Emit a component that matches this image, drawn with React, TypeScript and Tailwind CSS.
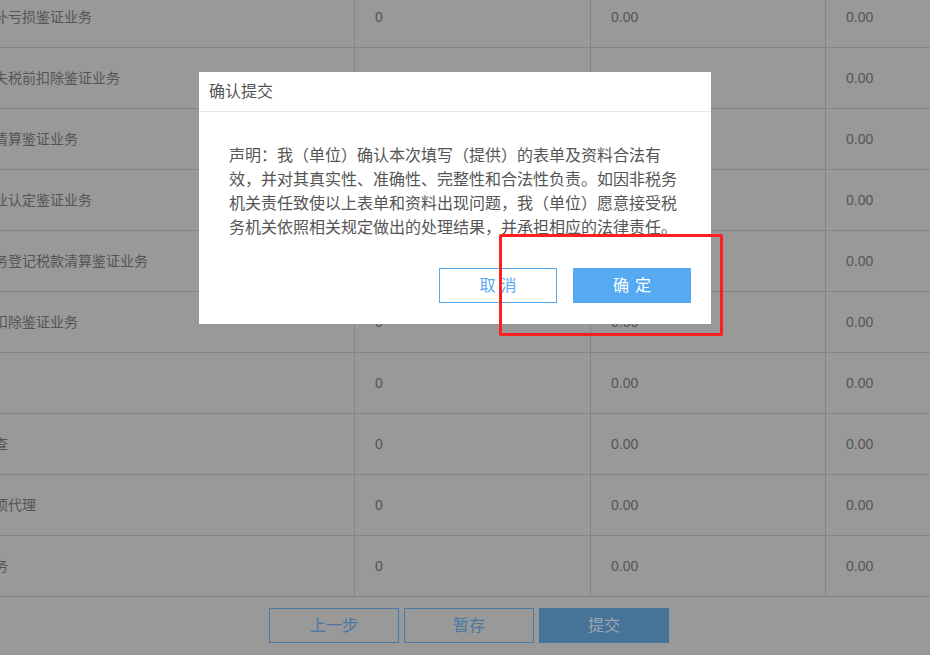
const FONT = "font-['Liberation_Sans','Noto_Sans_CJK_SC',sans-serif]"

const rows = [
  '补亏损鉴证业务',
  '失税前扣除鉴证业务',
  '清算鉴证业务',
  '业认定鉴证业务',
  '务登记税款清算鉴证业务',
  '扣除鉴证业务',
  '',
  '查',
  '项代理',
  '务',
]

function Row({ label }: { label: string }) {
  return (
    <div className="flex h-[61px] border-b border-[#858585] text-[14px] text-[#555]">
      <div className="flex w-[355px] items-center border-r border-[#858585]">
        <span className="-ml-[6px] whitespace-nowrap">{label}</span>
      </div>
      <div className="flex w-[236px] items-center border-r border-[#858585] pl-[20px]">0</div>
      <div className="flex w-[235px] items-center border-r border-[#858585] pl-[20px]">0.00</div>
      <div className="flex flex-1 items-center pl-[20px]">0.00</div>
    </div>
  )
}

export default function App() {
  return (
    <div className={`relative h-[655px] w-[930px] overflow-hidden bg-[#999] ${FONT}`}>
      {/* ── table (behind overlay) ── */}
      <div className="-mt-[13px]">
        {rows.map((r, i) => (
          <Row key={i} label={r} />
        ))}
      </div>

      {/* ── step buttons ── */}
      <div className="mt-[11px] flex justify-center gap-[5px] pl-[8px] text-[16px]">
        <button className="h-[35px] w-[130px] border border-[#4a7aa3] text-[#4a78a0]">上一步</button>
        <button className="h-[35px] w-[130px] border border-[#4a7aa3] text-[#4a78a0]">暂存</button>
        <button className="h-[35px] w-[130px] bg-[#467398] text-[#9aa6b2]">提交</button>
      </div>

      {/* ── dialog ── */}
      <div className="absolute left-[199px] top-[72px] w-[512px] bg-white">
        <div className="flex h-[40px] items-center border-b border-[#e8e8e8] pl-[10px] text-[16px] text-[#555]">
          确认提交
        </div>
        <div className="px-[30px] pb-[21px] pt-[32px]">
          <p className="text-[16px] leading-[24px] text-[#555]">
            声明：我（单位）确认本次填写（提供）的表单及资料合法有效，并对其真实性、准确性、完整性和合法性负责。如因非税务机关责任致使以上表单和资料出现问题，我（单位）愿意接受税务机关依照相关规定做出的处理结果，并承担相应的法律责任。
          </p>
          <div className="mt-[28px] flex justify-end gap-[16px] pr-[-10px]">
            <button className="h-[35px] w-[118px] border border-[#55aaf0] pl-[5px] text-[16px] tracking-[5px] text-[#55aaf0]">
              取消
            </button>
            <button className="-mr-[10px] h-[35px] w-[118px] bg-[#55aaf2] pl-[6px] text-[16px] tracking-[6px] text-white">
              确定
            </button>
          </div>
        </div>
      </div>

      {/* ── annotation box ── */}
      <div className="absolute left-[499px] top-[234px] h-[102px] w-[224px] rounded-[2px] border-[3px] border-[#ff1f1f]" />
    </div>
  )
}
